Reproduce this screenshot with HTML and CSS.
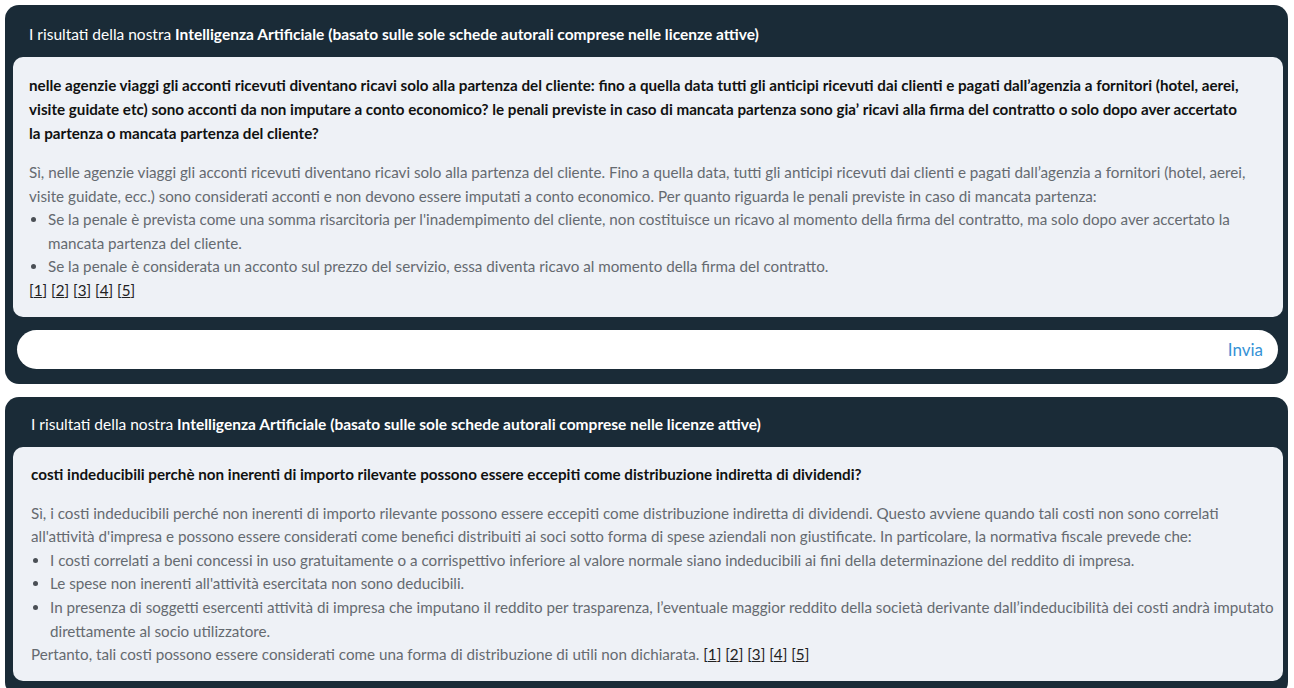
FILE: index.html
```html
<!DOCTYPE html>
<html lang="it">
<head>
    <meta charset="UTF-8">
    <meta name="viewport" content="width=device-width, initial-scale=1.0">
    <title>Intelligenza Artificiale - Risultati</title>
    <link rel="stylesheet" href="styles.css">
</head>
<body>
    <!-- Prima risposta, con campo per una nuova domanda -->
    <div class="ai-card">
        <div class="ai-header">I risultati della nostra <strong>Intelligenza Artificiale (basato sulle sole schede autorali comprese nelle licenze attive)</strong></div>
        <div class="ai-box">
            <p class="question">nelle agenzie viaggi gli acconti ricevuti diventano ricavi solo alla partenza del cliente: fino a quella data tutti gli anticipi ricevuti dai clienti e pagati dall’agenzia a fornitori (hotel, aerei, visite guidate etc) sono acconti da non imputare a conto economico? le penali previste in caso di mancata partenza sono gia’ ricavi alla firma del contratto o solo dopo aver accertato la partenza o mancata partenza del cliente?</p>
            <div class="answer">
                Sì, nelle agenzie viaggi gli acconti ricevuti diventano ricavi solo alla partenza del cliente. Fino a quella data, tutti gli anticipi ricevuti dai clienti e pagati dall’agenzia a fornitori (hotel, aerei, visite guidate, ecc.) sono considerati acconti e non devono essere imputati a conto economico. Per quanto riguarda le penali previste in caso di mancata partenza:
                <ul>
                    <li>Se la penale è prevista come una somma risarcitoria per l'inadempimento del cliente, non costituisce un ricavo al momento della firma del contratto, ma solo dopo aver accertato la mancata partenza del cliente.</li>
                    <li>Se la penale è considerata un acconto sul prezzo del servizio, essa diventa ricavo al momento della firma del contratto.</li>
                </ul>
                <span class="refs">[<a href="#">1</a>] [<a href="#">2</a>] [<a href="#">3</a>] [<a href="#">4</a>] [<a href="#">5</a>]</span>
            </div>
        </div>
        <form class="ask">
            <input type="text" class="ask-input" aria-label="Domanda">
            <button type="button" class="ask-send">Invia</button>
        </form>
    </div>

    <div class="ai-card ai-card-second">
        <div class="ai-header">I risultati della nostra <strong>Intelligenza Artificiale (basato sulle sole schede autorali comprese nelle licenze attive)</strong></div>
        <div class="ai-box">
            <p class="question">costi indeducibili perchè non inerenti di importo rilevante possono essere eccepiti come distribuzione indiretta di dividendi?</p>
            <div class="answer">
                Sì, i costi indeducibili perché non inerenti di importo rilevante possono essere eccepiti come distribuzione indiretta di dividendi. Questo avviene quando tali costi non sono correlati all'attività d'impresa e possono essere considerati come benefici distribuiti ai soci sotto forma di spese aziendali non giustificate. In particolare, la normativa fiscale prevede che:
                <ul>
                    <li>I costi correlati a beni concessi in uso gratuitamente o a corrispettivo inferiore al valore normale siano indeducibili ai fini della determinazione del reddito di impresa.</li>
                    <li>Le spese non inerenti all'attività esercitata non sono deducibili.</li>
                    <li>In presenza di soggetti esercenti attività di impresa che imputano il reddito per trasparenza, l’eventuale maggior reddito della società derivante dall’indeducibilità dei costi andrà imputato direttamente al socio utilizzatore.</li>
                </ul>
                Pertanto, tali costi possono essere considerati come una forma di distribuzione di utili non dichiarata. <span class="refs">[<a href="#">1</a>] [<a href="#">2</a>] [<a href="#">3</a>] [<a href="#">4</a>] [<a href="#">5</a>]</span>
            </div>
        </div>
    </div>
</body>
</html>
```

FILE: styles.css
```css
body {
    margin: 0;
    padding: 5px 6px 5px 5px;
    background-color: #ffffff;
    font-family: Lato, "Open Sans", sans-serif;
    font-size: 15.2px;
}

.ai-card {
    background-color: #1a2b37;
    border-radius: 14px;
    padding: 0 5px 15px 8px;
    margin-bottom: 13px;
}

.ai-header {
    color: #ffffff;
    font-size: 15.5px;
    line-height: 24px;
    padding: 17px 16px 11px 16px;
}

.ai-header strong {
    font-weight: 700;
}

.ai-box {
    background-color: #eef1f6;
    border-radius: 10px;
    padding: 16px 7px 14px 16px;
}

.question {
    margin: 0 26px 16px 0;
    color: #111111;
    font-weight: 700;
    line-height: 24px;
}

.answer {
    color: #656a70;
    line-height: 23.6px;
}

.answer ul {
    margin: 0;
    padding-left: 19px;
}

.answer li::marker {
    color: #4a4f55;
}

.refs {
    color: #222222;
}

.refs a {
    color: #222222;
    text-decoration: underline;
}

.ask {
    display: flex;
    align-items: center;
    background-color: #ffffff;
    border-radius: 20px;
    height: 39px;
    margin: 13px 5px 0 4px;
    padding: 0 15px 0 20px;
}

.ask-input {
    flex: 1;
    border: none;
    outline: none;
    background: transparent;
    font-family: inherit;
    font-size: 15px;
}

.ask-send {
    border: none;
    background: transparent;
    color: #3592d6;
    font-family: inherit;
    font-size: 17px;
    padding: 0;
    cursor: pointer;
}

.ai-card-second .ai-header {
    padding-top: 15px;
    padding-left: 18px;
}

.ai-card-second .ai-box {
    padding-top: 15px;
    padding-left: 18px;
}
```
